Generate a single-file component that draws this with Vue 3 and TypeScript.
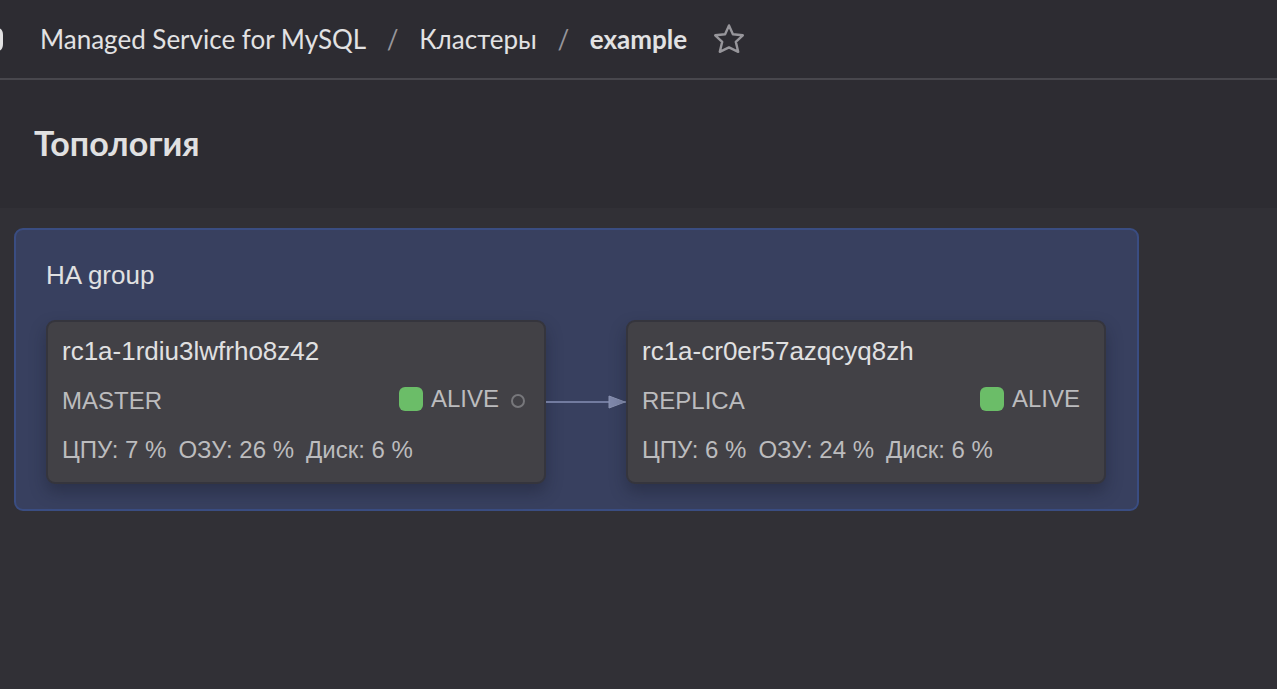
<script setup lang="ts">
interface HostNode {
  name: string
  role: string
  status: string
  metrics: string[]
  source: boolean
}

const hosts: HostNode[] = [
  {
    name: 'rc1a-1rdiu3lwfrho8z42',
    role: 'MASTER',
    status: 'ALIVE',
    metrics: ['ЦПУ: 7 %', 'ОЗУ: 26 %', 'Диск: 6 %'],
    source: true,
  },
  {
    name: 'rc1a-cr0er57azqcyq8zh',
    role: 'REPLICA',
    status: 'ALIVE',
    metrics: ['ЦПУ: 6 %', 'ОЗУ: 24 %', 'Диск: 6 %'],
    source: false,
  },
]
</script>

<template>
  <div class="page">
    <header class="topbar">
      <button class="service" type="button" aria-label="Сервисы">
        <svg width="4" height="28" viewBox="0 0 4 28" aria-hidden="true">
          <path d="M-6 4H-4Q1.5 4 1.5 10V19Q1.5 25 -4 25H-6" fill="none" stroke="#e2e2e3" stroke-width="3" />
        </svg>
      </button>
      <nav class="crumbs">
        <a href="#">Managed Service for MySQL</a>
        <span class="slash">/</span>
        <a href="#">Кластеры</a>
        <span class="slash">/</span>
        <a href="#" class="current" aria-current="page">example</a>
      </nav>
      <button class="star" type="button" aria-label="В избранное">
        <svg width="32" height="32" viewBox="0 0 32 32" aria-hidden="true">
          <path
            d="M16 2.4 19.9 11.2 29.8 12.3 22.8 18.9 25.2 28.8 16 24.4 6.8 28.8 9.2 18.9 2.2 12.3 12.1 11.2Z"
            fill="none"
            stroke="#97969b"
            stroke-width="2.4"
            stroke-linejoin="round"
          />
        </svg>
      </button>
    </header>

    <div class="heading">
      <h1>Топология</h1>
    </div>

    <main class="canvas">
      <section class="group">
        <h2>HA group</h2>
        <div class="row">
          <template v-for="(host, index) in hosts" :key="host.name">
            <svg v-if="index > 0" class="link" width="80" height="16" viewBox="0 0 80 16" aria-hidden="true">
              <path d="M0 8H80" stroke="#727b9f" stroke-width="2" />
              <path d="M63 2 79 8 63 14Z" fill="#7f88aa" stroke="#8c94b3" stroke-width="1" />
            </svg>
            <article class="node" :class="{ source: host.source }">
              <h3>{{ host.name }}</h3>
              <div class="state">
                <span class="role">{{ host.role }}</span>
                <span class="status"><i class="lamp"></i>{{ host.status }}</span>
                <i v-if="host.source" class="port"></i>
              </div>
              <div class="metrics">
                <span v-for="metric in host.metrics" :key="metric">{{ metric }}</span>
              </div>
            </article>
          </template>
        </div>
      </section>
    </main>
  </div>
</template>

<style>
body {
  margin: 0;
  background: #313036;
}
</style>

<style scoped>
.page {
  display: flex;
  flex-direction: column;
  min-height: 100vh;
  color: #e0e0e1;
  background: #313036;
  font-family: "Liberation Sans", Arial, sans-serif;
}

.topbar {
  display: flex;
  align-items: center;
  height: 78px;
  border-bottom: 2px solid #48474d;
  background: #2d2c32;
}

button {
  display: flex;
  padding: 0;
  border: 0;
  background: none;
  cursor: pointer;
}

.service {
  margin-right: 36px;
}

.crumbs {
  display: flex;
  align-items: center;
  font: 26px/36px Lato, "Noto Sans", sans-serif;
  white-space: nowrap;
}

.crumbs a {
  color: #e2e2e3;
  text-decoration: none;
}

.crumbs .current {
  font-weight: 700;
}

.slash {
  width: 53px;
  color: #97969b;
  text-align: center;
}

.star {
  margin-left: 26px;
}

.heading {
  box-sizing: border-box;
  height: 128px;
  padding: 0 34px 2px;
  display: flex;
  align-items: center;
  background: #2d2c32;
}

h1,
h2,
h3 {
  margin: 0;
}

h1 {
  font: 700 34px/44px Lato, "Noto Sans", sans-serif;
}

.canvas {
  flex: 1;
  padding: 20px 14px;
}

.group {
  width: fit-content;
  padding: 28px 31px 25px 30px;
  border: 2px solid #3a4d82;
  border-radius: 9px;
  background: #38405f;
  box-sizing: border-box;
}

h2 {
  padding-bottom: 28px;
  font-size: 26px;
  font-weight: 400;
  line-height: 34px;
}

.row {
  display: flex;
  align-items: center;
}

.node {
  box-sizing: border-box;
  width: 480px;
  padding: 12px 24px 16px 14px;
  border: 2px solid #35353d;
  border-radius: 9px;
  background: #424146;
  box-shadow: 0 8px 16px rgba(20, 22, 38, 0.35);
  color: #bcbcbe;
  font-size: 24px;
  line-height: 32px;
  white-space: nowrap;
}

.node.source {
  width: 500px;
  padding-right: 19px;
}

h3 {
  color: #e0e0e1;
  font-size: 26px;
  font-weight: 400;
  line-height: 34px;
}

.state {
  display: flex;
  align-items: center;
  padding: 15px 0;
}

.status {
  display: flex;
  align-items: center;
  gap: 8px;
  margin-left: auto;
  padding-bottom: 4px;
}

.lamp {
  width: 24px;
  height: 24px;
  border-radius: 6px;
  background: #6bbd68;
}

.port {
  box-sizing: border-box;
  width: 14px;
  height: 14px;
  margin-left: 12px;
  border: 2px solid #77777b;
  border-radius: 50%;
}

.metrics {
  display: flex;
  gap: 12px;
}

.link {
  flex: none;
}
</style>
